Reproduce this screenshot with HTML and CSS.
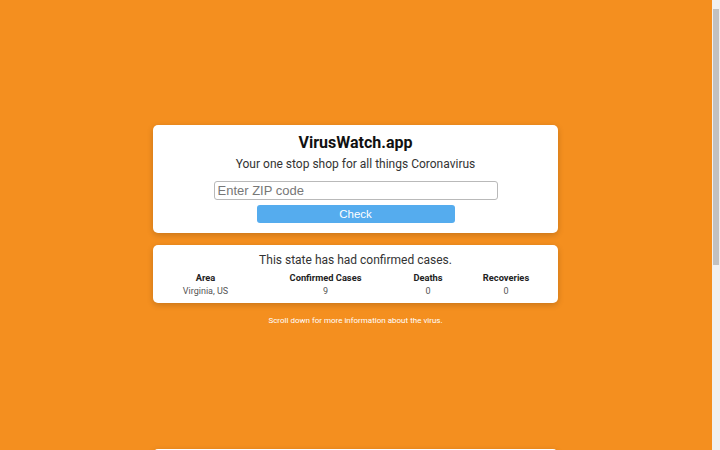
FILE: index.html
```html
<!DOCTYPE html>
<html>
<head>
<meta charset="utf-8">
<link rel="stylesheet" href="styles.css">
</head>
<body>
<main class="page">
  <section class="card search">
    <h1 class="title">VirusWatch.app</h1>
    <p class="subtitle">Your one stop shop for all things Coronavirus</p>
    <input class="zip" type="text" placeholder="Enter ZIP code">
    <button class="check">Check</button>
  </section>
  <section class="card result">
    <p class="status">This state has had confirmed cases.</p>
    <div class="stats">
      <div class="th">Area</div>
      <div class="th">Confirmed Cases</div>
      <div class="th">Deaths</div>
      <div class="th">Recoveries</div>
      <div class="td">Virginia, US</div>
      <div class="td">9</div>
      <div class="td">0</div>
      <div class="td">0</div>
    </div>
  </section>
  <p class="note">Scroll down for more information about the virus.</p>
  <section class="card info"></section>
</main>
<div class="scrollbar"><div class="thumb"></div></div>
</body>
</html>
```
FILE: styles.css
```css
html, body {
  margin: 0;
  padding: 0;
}
body {
  background: #f48f1f;
  font-family: Roboto, "Liberation Sans", sans-serif;
  padding-right: 9px;
}
.page {
  width: 405px;
  margin: 0 auto;
  padding-top: 125px;
  display: flex;
  flex-direction: column;
}
.card {
  background: #fff;
  border-radius: 5px;
  box-shadow: 0 2px 6px rgba(0, 0, 0, 0.18);
}
.search {
  display: flex;
  flex-direction: column;
  align-items: center;
  padding: 7px 0 10px;
}
.title {
  margin: 0;
  font-size: 16px;
  font-weight: 700;
  color: #111;
  line-height: 22px;
}
.subtitle {
  margin: 2px 0 0;
  font-size: 12px;
  color: #333;
  line-height: 16px;
}
.zip {
  margin-top: 9px;
  width: 284px;
  height: 19px;
  box-sizing: border-box;
  border: 1px solid #b9b9b9;
  border-radius: 3px;
  padding: 0 3px;
  font-family: "Liberation Sans", Arial, sans-serif;
  font-size: 13px;
  color: #333;
  background: #fff;
}
.zip::placeholder {
  color: #777;
}
.check {
  margin-top: 5px;
  width: 198px;
  height: 18px;
  border: 0;
  border-radius: 3px;
  background: #55acee;
  color: #fff;
  font-family: "Liberation Sans", Arial, sans-serif;
  font-size: 11.5px;
  padding: 0;
  line-height: 18px;
}
.result {
  margin-top: 12px;
  padding: 7px 0 5px;
  display: flex;
  flex-direction: column;
  align-items: center;
}
.status {
  margin: 0;
  font-size: 12px;
  line-height: 16px;
  color: #333;
}
.stats {
  width: 100%;
  margin-top: 3px;
  display: grid;
  grid-template-columns: 105px 135px 70px 86px;
  text-align: center;
}
.th {
  font-size: 9.3px;
  font-weight: 700;
  color: #222;
  line-height: 13px;
  white-space: nowrap;
}
.td {
  font-size: 9px;
  color: #555;
  line-height: 14px;
  white-space: nowrap;
}
.note {
  margin: 12px 0 0;
  text-align: center;
  font-size: 8px;
  font-weight: 400;
  color: #fff;
  line-height: 12px;
}
.info {
  margin-top: 122px;
  height: 300px;
  margin-bottom: 40px;
}
.scrollbar {
  position: fixed;
  top: 0;
  right: 0;
  width: 8px;
  height: 100%;
  background: #f1f1f1;
  padding-top: 9px;
  box-sizing: border-box;
}
.thumb {
  margin-left: 1px;
  width: 6px;
  height: 256px;
  background: #c1c1c1;
}
```
